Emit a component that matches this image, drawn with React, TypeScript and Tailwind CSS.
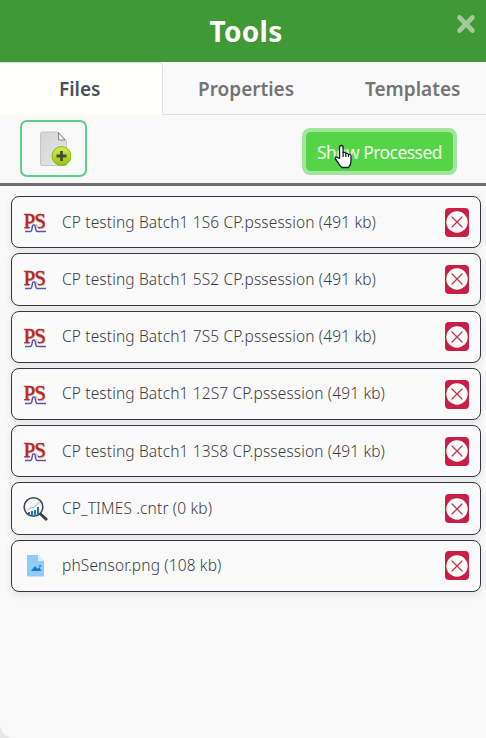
const files = [
  { name: 'CP testing Batch1 1S6 CP.pssession (491 kb)', kind: 'ps' },
  { name: 'CP testing Batch1 5S2 CP.pssession (491 kb)', kind: 'ps' },
  { name: 'CP testing Batch1 7S5 CP.pssession (491 kb)', kind: 'ps' },
  { name: 'CP testing Batch1 12S7 CP.pssession (491 kb)', kind: 'ps' },
  { name: 'CP testing Batch1 13S8 CP.pssession (491 kb)', kind: 'ps' },
  { name: 'CP_TIMES .cntr (0 kb)', kind: 'chart' },
  { name: 'phSensor.png (108 kb)', kind: 'image' },
];

function FileIcon({ kind }: { kind: string }) {
  if (kind === 'ps') {
    return (
      <span className="relative block h-6 w-6 bg-[#fdfdfc]">
        <span className="absolute left-[0px] top-[1px] origin-left font-['Liberation_Serif',serif] text-[21px] leading-[20px] tracking-[-1px] text-[#b5271f] [-webkit-text-stroke:0.4px_#b5271f] [text-shadow:0.5px_0.5px_1px_#c98b84]">PS</span>
        <svg className="absolute inset-0" width="24" height="24" viewBox="0 0 24 24" fill="none">
          <path d="M6 20.500c1.500-1 1.500-5.500 3-5.500h2c1.500 0 1.500 4.500 3 5.500" stroke="#fff" strokeWidth="3" opacity=".7" />
          <path d="M1 21.500h5.500c2 0 1.500-6.500 2.500-6.500h1.500c1 0 .8 6.500 2.500 6.500h9" stroke="#4f58b3" strokeWidth="1.500" />
        </svg>
      </span>
    );
  }
  if (kind === 'chart') {
    return (
      <svg width="26" height="26" viewBox="0 0 26 26" fill="none">
        <circle cx="10.500" cy="11" r="9.300" fill="#f4f8fb" stroke="#454a51" strokeWidth="1.600" />
        <path d="M5 18v-2h2v3zM8 19v-4h2v5zM11 20v-6h2v6zM14 19v-8h2v7z" fill="#2476bd" />
        <path d="M4.500 14l4-3 2 1 6-6" stroke="#83b7dd" strokeWidth="1" />
        <path d="M17 17.500l7 6.500" stroke="#3c4147" strokeWidth="3" />
      </svg>
    );
  }
  return (
    <svg width="26" height="26" viewBox="0 0 26 26">
      <path d="M5 2h10l6 6v15.500H5q-1 0-1-1V3q0-1 1-1z" fill="#91cbf8" />
      <path d="M15 2l6 6h-6z" fill="#dceffd" />
      <path d="M8 18l4-5 2.500 3 1.500-2 2.500 4z" fill="#1878c5" />
      <circle cx="17" cy="13" r="1" fill="#1878c5" />
    </svg>
  );
}

export default function App() {
  return (
    <div className="h-[738px] w-[486px] overflow-hidden whitespace-nowrap bg-[#e6e6e6] font-['Noto_Sans','Open_Sans',sans-serif]">
      <div className="flex h-full flex-col rounded-bl-[14px] bg-[#f9f9f9]">
        <header className="relative flex h-[62px] shrink-0 items-center justify-center bg-[#3f9934] pl-[6px] text-white">
          <h1 className="text-[28px] font-bold leading-[60px] tracking-[0.3px]">Tools</h1>
          <svg className="absolute left-[456px] top-[14px]" width="20" height="20" viewBox="0 0 20 20">
            <path d="M3.500 3.500l13 13M16.500 3.500l-13 13" stroke="#a0cc9b" strokeWidth="4.600" strokeLinecap="round" />
          </svg>
        </header>
        <nav className="flex h-[53px] shrink-0 text-[19px] font-semibold leading-[26px] text-[#747474]">
          <div className="flex w-[163px] rounded-tr-[5px] border-r border-t border-[#dedee8] bg-[#fffffc] pl-[59px] pt-[13px] text-[#4b5058]">
            <span>Files</span>
          </div>
          <div className="flex flex-1 border-b border-[#dedfe2] pl-[35px] pt-[14px]">
            <span className="w-[167px]">Properties</span>
            <span>Templates</span>
          </div>
        </nav>
        <section className="flex h-[71px] shrink-0 items-start justify-between border-b-[3px] border-[#706e6f] pl-[20px] pr-[33px] pt-[5px]">
          <button className="flex h-[57px] w-[67px] items-center justify-center rounded-[7px] border-2 border-[#60cd8b]">
            <svg width="34" height="38" viewBox="0 0 34 38">
              <defs>
                <linearGradient id="paper" x1="0" y1="0" x2="1" y2="1"><stop stopColor="#d4d4d4" /><stop offset="1" stopColor="#e7e7e7" /></linearGradient>
                <linearGradient id="plus" x1="0" y1="0" x2="0" y2="1"><stop stopColor="#d1e862" /><stop offset=".5" stopColor="#b8dc25" /><stop offset="1" stopColor="#92c211" /></linearGradient>
              </defs>
              <path d="M5 2h15l9.500 8.500V35.500H5q-1.500 0-1.500-1.500V3.500Q3.500 2 5 2z" fill="url(#paper)" stroke="#c5c5c5" />
              <path d="M21.500 2.500v7.500h6.500z" fill="#f4f4f4" stroke="#858585" strokeWidth="1" />
              <circle cx="24.500" cy="26" r="9.500" fill="url(#plus)" stroke="#88b515" />
              <path d="M24.500 21v10M19.500 26h10" stroke="#414c35" strokeWidth="2.800" />
            </svg>
          </button>
          <button className="relative mt-[12px] flex h-[39px] w-[147px] justify-center rounded-[4px] bg-[#56d447] pt-[7px] text-[17.5px] leading-[26px] tracking-[-0.55px] text-[#edffe9] outline-4 outline-[#a4e59e]">
            <span>Show Processed</span>
            <svg className="absolute left-[27px] top-[12px]" width="21" height="25" viewBox="0 0 21 25">
              <path d="M6.500 14.500V3.500q0-2 1.800-2t1.800 2v5q2-.8 2.700 1 2-.7 2.700 1 2.500-.8 2.500 1.500v5q0 4-2.500 6.500H9q-2.500-2-4-5l-3-4q0-2.500 2.500-1z" fill="#fff" stroke="#191b28" strokeWidth="1.300" strokeLinejoin="round" />
              <path d="M10.100 8v5M12.800 9.500v3.500M15.500 10.500V13" stroke="#191b28" strokeWidth="1.200" />
            </svg>
          </button>
        </section>
        <main className="flex flex-col gap-[5px] pl-[11px] pr-[5px] pt-[10px]">
          {files.map((file) => (
            <div key={file.name} className="flex h-[52.300px] items-center rounded-[8px] border border-[#343641] bg-[#fafafa] pr-[11px] shadow-[0_3px_8px_rgba(0,0,0,0.09)]">
              <span className="flex w-[50px] justify-center pr-[3px]"><FileIcon kind={file.kind} /></span>
              <span className="flex-1 text-[15.5px] font-[350] tracking-[0.14px] text-[#3a3d43]">{file.name}</span>
              <button className="flex h-[29px] w-[24px] items-center justify-center rounded-[4px] bg-[#c91f46]">
                <svg width="22" height="22" viewBox="0 0 22 22"><circle cx="11" cy="11" r="10.700" fill="#fffefc" /><path d="M6 6l10 10M16 6L6 16" stroke="#bf3453" strokeWidth="1.300" strokeLinecap="round" /></svg>
              </button>
            </div>
          ))}
        </main>
      </div>
    </div>
  );
}
